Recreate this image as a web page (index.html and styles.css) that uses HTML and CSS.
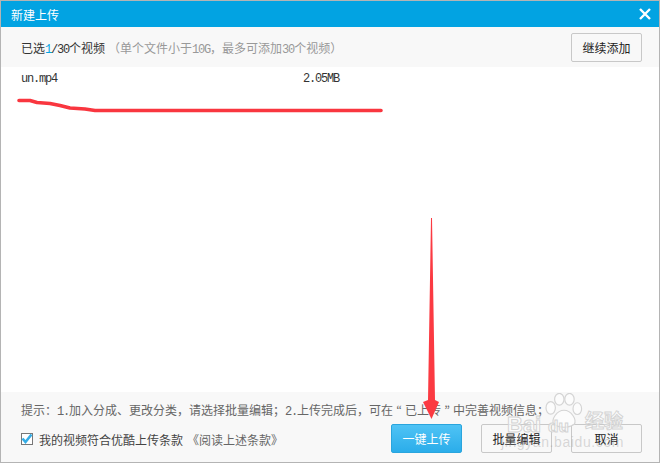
FILE: index.html
```html
<!DOCTYPE html>
<html lang="zh">
<head>
<meta charset="utf-8">
<title>新建上传</title>
<link rel="stylesheet" href="styles.css">
</head>
<body>
<div class="dialog">
  <header class="titlebar">
    <span class="title">新建上传</span>
    <svg class="close" width="12" height="12" viewBox="0 0 12 12"><path d="M1 1L11 11M11 1L1 11" stroke="#fff" stroke-width="2.4" fill="none"/></svg>
  </header>
  <div class="toolbar">
    <span class="count">已选<span class="lat num">1</span><span class="lat">/30</span>个视频</span>
    <span class="hint">（单个文件小于<span class="lat">10G</span>，最多可添加<span class="lat">30</span>个视频）</span>
    <button class="btn add">继续添加</button>
  </div>
  <main class="list">
    <div class="row"><span class="name">un.mp4</span><span class="size">2.05MB</span></div>
  </main>
  <footer class="footer">
    <p class="tip">提示：<span class="lat">1.</span>加入分成、更改分类，请选择批量编辑；<span class="lat">2.</span>上传完成后，可在<span class="quote">“</span>已上传<span class="quote">”</span>中完善视频信息；</p>
    <div class="actions">
      <span class="check"><svg width="12" height="12" viewBox="0 0 12 12"><path d="M1.500 5.500L4.500 9L10.500 1.500" stroke="#35ade6" stroke-width="2.600" fill="none"/></svg></span>
      <span class="agree">我的视频符合优酷上传条款</span>
      <span class="read">《阅读上述条款》</span>
      <button class="btn primary">一键上传</button>
      <button class="btn">批量编辑</button>
      <button class="btn">取消</button>
    </div>
  </footer>
  <svg class="mark" width="660" height="463" viewBox="0 0 660 463">
    <path d="M19 100.500L30 100.500L37 102.500L50 103.500L60 105.500L70 108L85 109L95 110.500L381 110.500" stroke="#f9363f" stroke-width="3.600" fill="none" stroke-linejoin="round" stroke-linecap="round"/>
    <path d="M431 218L432 218L435 400L439 402L431.500 419L423 402L428 400Z" fill="#fb3a42"/>
  </svg>
  <div class="wm">
    <svg class="paw" width="38" height="36" viewBox="0 0 48 46"><g fill="#fff" fill-opacity=".6" stroke="#d4d4d4" stroke-width="1.500"><ellipse cx="7" cy="19" rx="6" ry="8"/><ellipse cx="18" cy="8" rx="6" ry="7.500"/><ellipse cx="31" cy="8" rx="6" ry="7.500"/><ellipse cx="41" cy="20" rx="5.500" ry="7.500"/><path d="M24 22C15 22 7 34 11 40C17 45 31 45 37 40C41 34 33 22 24 22Z"/></g></svg>
    <span class="wm-bai">Bai</span><span class="wm-du">du</span><span class="wm-jy">经验</span>
    <span class="wm-url">jingyan.baidu.com</span>
  </div>
</div>
</body>
</html>
```
FILE: styles.css
```css
* { box-sizing: border-box; }
html, body { margin: 0; padding: 0; }
body { width: 660px; height: 463px; overflow: hidden; font-family: "Noto Sans CJK SC", "Liberation Sans", sans-serif; }
.dialog { position: relative; width: 660px; height: 463px; border: 1px solid #b4b4b4; display: flex; flex-direction: column; background: #fff; overflow: hidden; }
.titlebar { height: 26px; flex: none; background: #02a3e2; display: flex; align-items: center; justify-content: space-between; padding: 0 8px 0 10px; color: #fff; font-size: 12px; }
.toolbar { height: 40px; flex: none; background: #f8f8f8; display: flex; align-items: center; padding: 0 17px 0 20px; font-size: 12px; }
.lat { font-family: "Liberation Mono", monospace; font-size: 12px; letter-spacing: -1.2px; }
.quote { display: inline-block; width: 12px; text-align: center; font-family: "Noto Sans CJK JP", sans-serif; }
.count { color: #333; padding-top: 2px; }
.num { color: #02a3e2; }
.hint { color: #999; margin-left: 3px; padding-top: 2px; }
.btn { width: 71px; height: 29px; border: 1px solid #c8c8c8; border-radius: 2px; background: #f8f8f8; color: #222; font: inherit; font-size: 12px; padding: 0; }
.add { margin-left: auto; }
.list { flex: 1; padding: 6px 20px; }
.row { width: 318px; display: flex; justify-content: space-between; font-family: "Liberation Mono", monospace; font-size: 12px; letter-spacing: -1.2px; line-height: 13px; color: #333; }
.footer { height: 70px; flex: none; background: #f8f8f8; padding: 6px 17px 0 20px; font-size: 12px; color: #666; }
.tip { margin: 0; height: 24px; line-height: 24px; white-space: nowrap; }
.actions { display: flex; align-items: center; height: 29px; margin-top: 2px; }
.check { width: 12px; height: 12px; border: 1px solid #777; background: #fff; margin-right: 6px; margin-top: 1px; display: flex; }
.check svg { flex: none; margin: -1px; }
.agree { color: #444; padding-top: 2px; }
.read { color: #666; margin-left: 4px; padding-top: 2px; }
.actions .btn { margin-left: 19px; }
.actions .primary { margin-left: auto; border-color: #2aa5dd; background: linear-gradient(#4fc3f5, #2badea); color: #fff; }
.mark { position: absolute; left: -1px; top: -1px; pointer-events: none; }
.wm { position: absolute; left: 497px; top: 392px; width: 160px; height: 67px; pointer-events: none; }
.paw { position: absolute; left: 47px; top: 0; }
.wm-bai, .wm-du, .wm-jy, .wm-url { position: absolute; color: rgba(255,255,255,.6); -webkit-text-stroke: 1px #d4d4d4; font-family: "Liberation Sans", sans-serif; font-weight: bold; line-height: 1; }
.wm-bai { left: 9px; top: 21px; font-size: 22px; }
.wm-du { left: 50px; top: 25px; font-size: 17px; }
.wm-jy { left: 87px; top: 17px; font-size: 19px; font-family: "Noto Sans CJK SC", sans-serif; }
.wm-url { left: 3px; top: 42px; font-size: 14px; font-weight: normal; -webkit-text-stroke: 0; color: rgba(150,150,150,.35); letter-spacing: .6px; }
```
